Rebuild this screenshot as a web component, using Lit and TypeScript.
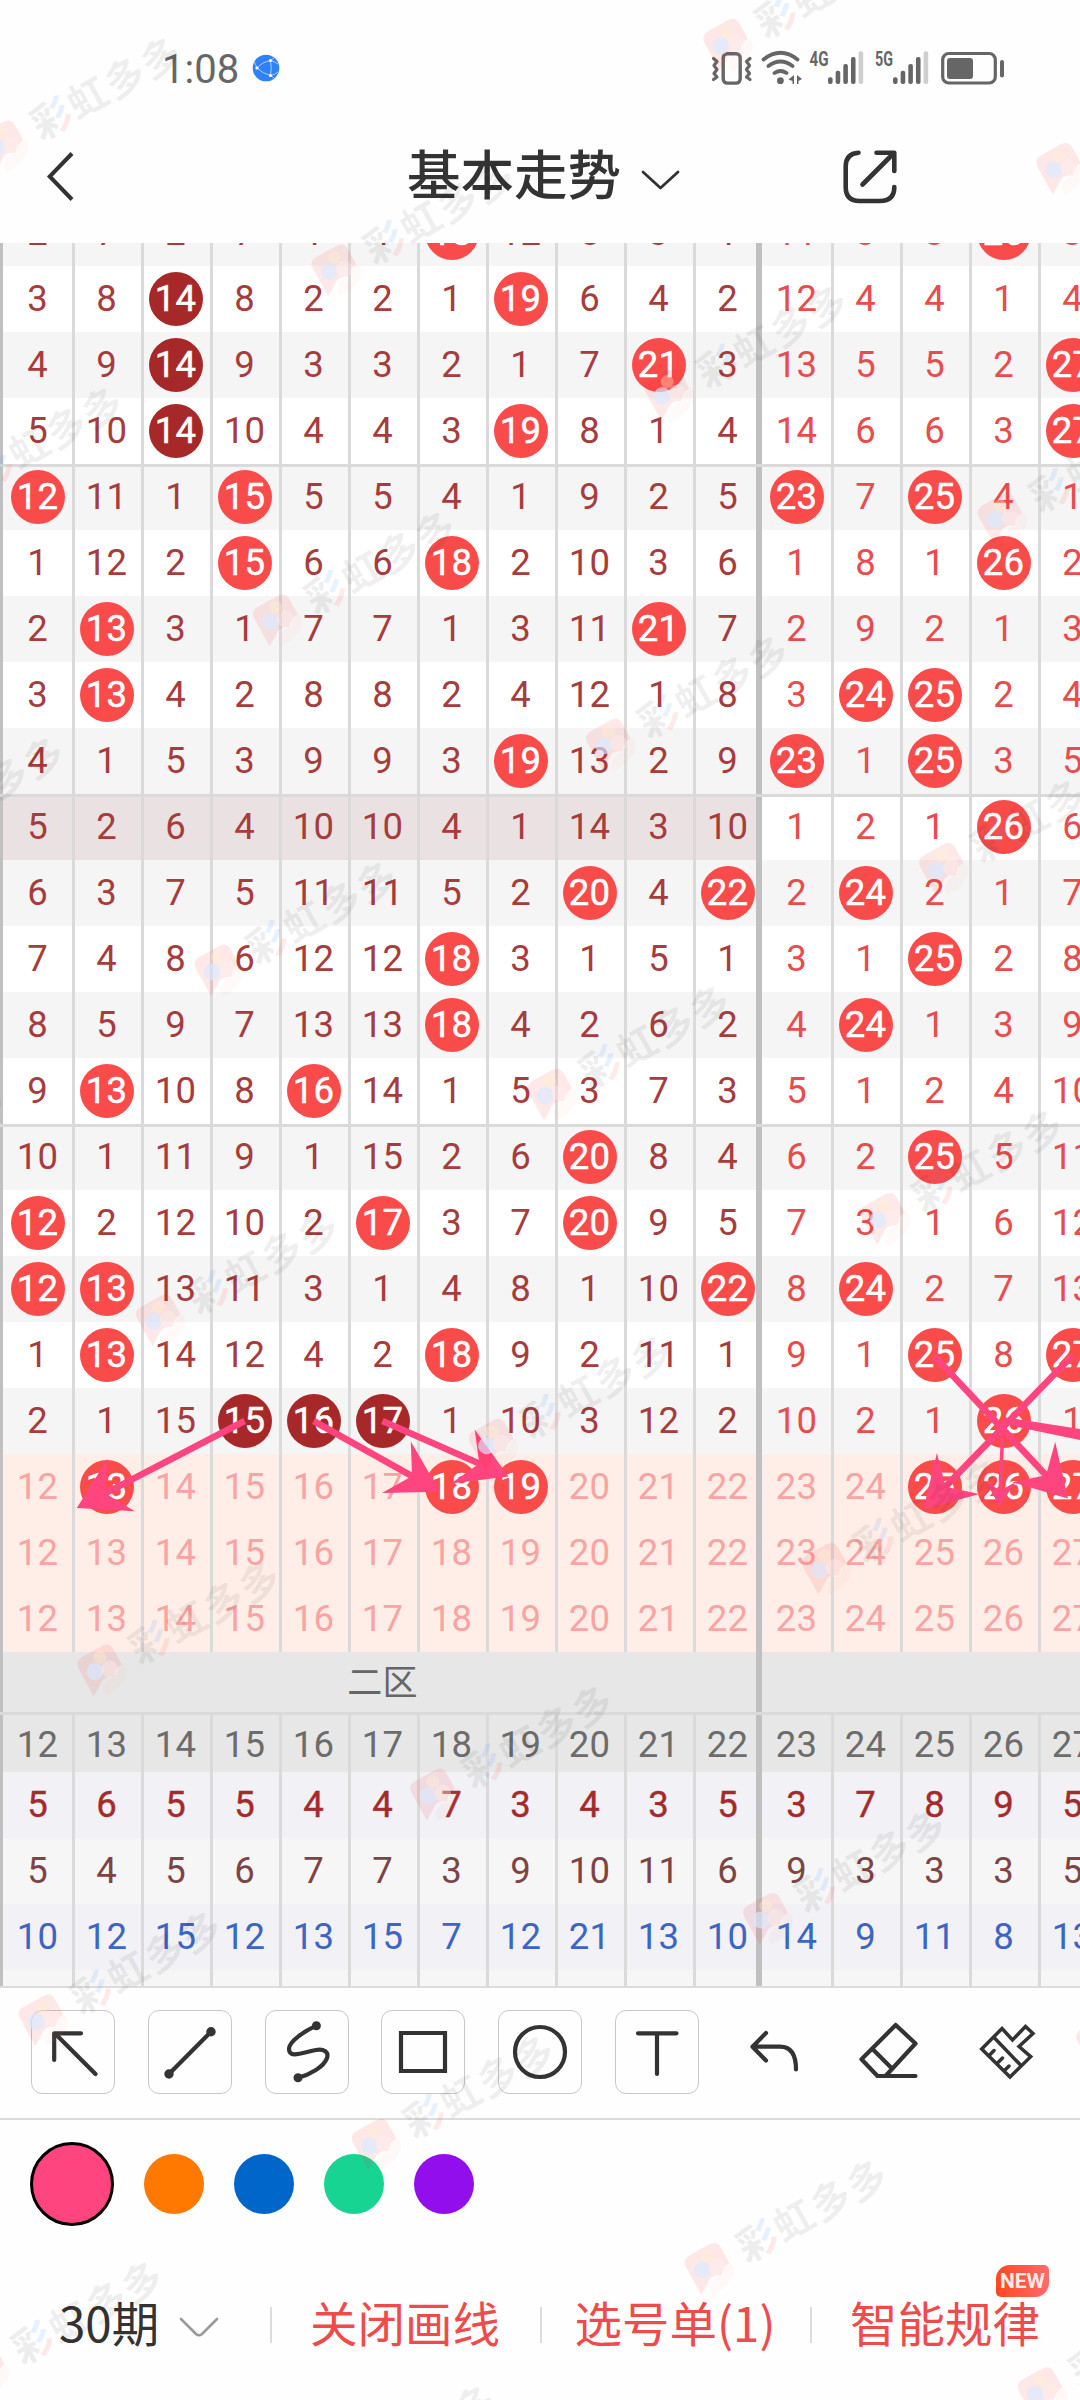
import { LitElement, html, svg, css } from "lit";
import { customElement, property } from "lit/decorators.js";
import { classMap } from "lit/directives/class-map.js";

// "*" marks a drawn number, "#" a repeated drawn number; plain values are miss counts.
const DRAWS: string[] = [
  "2 7 2 7 1 1 *18 12 5 3 1 11 3 3 *26 3",
  "3 8 #14 8 2 2 1 *19 6 4 2 12 4 4 1 4",
  "4 9 #14 9 3 3 2 1 7 *21 3 13 5 5 2 *27",
  "5 10 #14 10 4 4 3 *19 8 1 4 14 6 6 3 *27",
  "*12 11 1 *15 5 5 4 1 9 2 5 *23 7 *25 4 1",
  "1 12 2 *15 6 6 *18 2 10 3 6 1 8 1 *26 2",
  "2 *13 3 1 7 7 1 3 11 *21 7 2 9 2 1 3",
  "3 *13 4 2 8 8 2 4 12 1 8 3 *24 *25 2 4",
  "4 1 5 3 9 9 3 *19 13 2 9 *23 1 *25 3 5",
  "5 2 6 4 10 10 4 1 14 3 10 1 2 1 *26 6",
  "6 3 7 5 11 11 5 2 *20 4 *22 2 *24 2 1 7",
  "7 4 8 6 12 12 *18 3 1 5 1 3 1 *25 2 8",
  "8 5 9 7 13 13 *18 4 2 6 2 4 *24 1 3 9",
  "9 *13 10 8 *16 14 1 5 3 7 3 5 1 2 4 10",
  "10 1 11 9 1 15 2 6 *20 8 4 6 2 *25 5 11",
  "*12 2 12 10 2 *17 3 7 *20 9 5 7 3 1 6 12",
  "*12 *13 13 11 3 1 4 8 1 10 *22 8 *24 2 7 13",
  "1 *13 14 12 4 2 *18 9 2 11 1 9 1 *25 8 *27",
  "2 1 15 #15 #16 #17 1 10 3 12 2 10 2 1 *26 1",
];
const PICKS: string[] = [
  "12 *13 14 15 16 17 *18 *19 20 21 22 23 24 *25 *26 *27",
  "12 13 14 15 16 17 18 19 20 21 22 23 24 25 26 27",
  "12 13 14 15 16 17 18 19 20 21 22 23 24 25 26 27",
];
const NUMBERS = "12 13 14 15 16 17 18 19 20 21 22 23 24 25 26 27";
const STATS: [string, string][] = [
  ["count", "5 6 5 5 4 4 7 3 4 3 5 3 7 8 9 5"],
  ["average", "5 4 5 6 7 7 3 9 10 11 6 9 3 3 3 5"],
  ["longest", "10 12 15 12 13 15 7 12 21 13 10 14 9 11 8 13"],
  ["stub", "              "],
];

@customElement("trend-row")
class TrendRow extends LitElement {
  @property() values = "";
  @property() kind = "plain";
  @property({ type: Boolean }) ruled = false;

  static styles = css`
    :host { display: block; position: relative; flex: none; }
    .row { display: grid; grid-template-columns: repeat(16, 69px); height: 66px; padding-left: 3px;
      box-shadow: inset 3px 0 #c0c0c0; color: #a63c3c; background: #fff; }
    .rule { position: absolute; left: 0; right: 0; top: 0; height: 3px; background: #dadada; }
    .cell { display: flex; align-items: center; justify-content: center; box-shadow: inset 3px 0 #dadada; }
    .cell.first, .cell.zone { box-shadow: none; }
    .cell.last { box-shadow: inset 3px 0 #dadada, inset -6px 0 #c0c0c0; }
    .cell.three { color: #e84c4c; }
    .ball { width: 54px; height: 54px; border-radius: 50%; background: #fa4b4b; color: #fff;
      display: flex; align-items: center; justify-content: center; -webkit-text-stroke: .5px #fff; }
    .repeat { background: #a72829; }
    .striped { background: #f5f5f5; }
    .focus .cell:not(.three) { background: #eae1e2; }
    .pick, .pick .cell.three { color: #f9a3a3; }
    .pick { background: #feeee7; }
    .head, .head .cell.three { color: #6c6c6c; }
    .head { background: #e7e7e7; height: 60px; }
    .head .cell { padding-bottom: 3px; }
    .count, .count .cell.three { color: #a52a2a; -webkit-text-stroke: .4px #a52a2a; }
    .average, .average .cell.three { color: #7d4444; }
    .longest, .longest .cell.three { color: #3c65c4; }
    .count, .longest { background: #f1f1f6; }
    .average, .stub { background: #f6f6f6; }
    .stub { height: 16px; }
  `;

  render() {
    const cells = this.values.split(" ");
    while (cells.length < 16) cells.push("");
    return html`<div class=${"row " + this.kind}>
      ${cells.map((v, i) => {
        const hit = v[0] === "*" || v[0] === "#";
        return html`<div class=${classMap({ cell: true, first: i === 0, last: i === 10, zone: i === 11, three: i > 10 })}
          >${hit ? html`<span class=${classMap({ ball: true, repeat: v[0] === "#" })}>${v.slice(1)}</span>` : v}</div>`;
      })}
    </div>${this.ruled ? html`<div class="rule"></div>` : ""}`;
  }
}

type Arrow = [number, number, number, number];
const ARROWS: Arrow[] = [
  [244.6, 1421, 76.8, 1508],
  [313.6, 1421, 440, 1491.7],
  [382.5, 1421, 508.6, 1476.5],
  [934.3, 1356, 1067.9, 1498.5],
  [1072, 1356, 923.3, 1509.5],
];

function arrowPoints([x1, y1, x2, y2]: Arrow, scale = 1, half = 3.3): string {
  const len = Math.hypot(x2 - x1, y2 - y1);
  const ux = (x2 - x1) / len, uy = (y2 - y1) / len;
  const at = (back: number, side: number) =>
    `${(x2 - ux * back - uy * side).toFixed(1)},${(y2 - uy * back + ux * side).toFixed(1)}`;
  return [at(len, half), at(34 * scale, half), at(50 * scale, 29.5 * scale), at(0, 0),
    at(50 * scale, -29.5 * scale), at(34 * scale, -half), at(len, -half)].join(" ");
}

@customElement("app-root")
class AppRoot extends LitElement {
  static styles = css`
    :host { display: block; position: relative; width: 1080px; height: 2400px; overflow: hidden; background: #fefefe;
      font-family: Roboto, "Noto Sans CJK SC", sans-serif; color: #333; }
    svg { display: block; fill: none; stroke: #333; stroke-linecap: round; stroke-linejoin: round; }
    .status { display: flex; align-items: flex-start; height: 108px; box-sizing: border-box; padding: 45px 66px 0 162px; }
    .clock { font-size: 40px; line-height: 49px; color: #666; width: 90px; }
    .globe { margin-top: 9px; }
    .signals { margin: 0 0 0 auto; }
    .title-bar { display: grid; grid-template-columns: 407px 281px 1fr; align-items: start; height: 135px; }
    .back { margin: 41px 0 0 42px; }
    .title { display: flex; font: 500 53.5px/72px "Noto Sans CJK SC", sans-serif; padding-top: 28px; white-space: nowrap; }
    .title svg { margin: 31px 0 0 19px; }
    .share { margin: 41px 0 0 154px; }
    .board { display: flex; flex-direction: column; height: 1743px; overflow: hidden; font-size: 36.5px; line-height: 66px;
      letter-spacing: .2px; border-bottom: 2px solid #dcdcdc; box-sizing: content-box; }
    .board trend-row:first-child { margin-top: -43px; }
    .zones { display: grid; grid-template-columns: 762px 1fr; height: 60px; flex: none; background: #e7e7e7; box-shadow: inset 3px 0 #c0c0c0; }
    .zone-name { display: flex; align-items: center; justify-content: center; padding: 0 0 5px 3px; box-shadow: inset -6px 0 #c0c0c0;
      font: 35px/50px "Noto Sans CJK SC", sans-serif; color: #666; }
    .tools { display: flex; box-sizing: border-box; height: 132px; padding: 22px 0 0 31px; border-bottom: 2px solid #dcdcdc; }
    .tool { box-sizing: border-box; width: 84px; height: 84px; border: 1.5px solid #c8c8c8; border-radius: 11px; margin-right: 32.8px; }
    .tool svg { margin: -1px; }
    .action { margin-left: 0; }
    .colors { display: flex; align-items: center; gap: 30px; padding: 22px 0 0 30px; height: 84px; }
    .swatch { width: 60px; height: 60px; border-radius: 50%; }
    .pink { background: #ff457f; box-sizing: border-box; width: 84px; height: 84px; border: 3px solid #000; }
    .orange { background: #ff7800; }
    .blue { background: #0066ca; }
    .green { background: #18d493; }
    .purple { background: #920eec; }
    .menu { display: grid; grid-template-columns: repeat(4, 270px); margin-top: 63px; height: 72px;
      font: 47.5px/72px "Noto Sans CJK SC", sans-serif; color: #f04b4b; }
    .item { position: relative; display: flex; justify-content: center; align-items: center; white-space: nowrap; padding-bottom: 7px; height: 65px; }
    .item + .item { background: linear-gradient(#dcdcdc, #dcdcdc) 0 50% / 2px 36px no-repeat; }
    .periods { color: #333; justify-content: flex-start; padding-left: 59px; gap: 19px; }
    .periods svg { stroke: #999; margin-top: 12px; }
    .badge { position: absolute; right: 31px; top: -24px; width: 53px; height: 32px; border-radius: 14px 5px 14px 5px;
      background: linear-gradient(90deg, #ff4720, #ff6b6b); color: #ffe9e4; font: 700 21px/33px Roboto, sans-serif; text-align: center; }
    .overlay { position: absolute; left: 0; top: 0; pointer-events: none; }
    .arrows { fill: #ff457f; stroke: none; }
    .marks { stroke: none; font: 700 40px "Noto Sans CJK SC", sans-serif; text-anchor: middle; }
  `;

  private signalBars(x: number) {
    const tops = [77.3, 70.7, 64, 57, 51.3];
    return tops.map((t, i) => svg`<rect x=${x + i * 7.65 - 2.3} y=${t - 45} width="4.6" height=${84 - t} rx="2"
      fill=${i === 4 ? "#cecece" : "#666"} />`);
  }

  private statusIcons() {
    return html`<svg class="signals" width="304" height="46" viewBox="710 0 304 46">
      <g stroke="#666" stroke-width="3.4">
        <rect x="723.2" y="8.7" width="17" height="29.4" rx="4" />
        <path d="M713.5 13.5l3.5 3-3 4 3 4-3 4 3 3.500-3.500 2.500M750 13.500l-3.500 3 3 4-3 4 3 4-3 3.500 3.500 2.500" stroke-width="3.200" />
        <path d="M763.500 14.500Q780.500 1 797.500 14.500M768.500 21Q780.500 12 792.500 21M774.500 28Q780.500 24 786.500 28" stroke-width="3.800" />
        <rect x="942.700" y="8.500" width="52.600" height="29.500" rx="6" stroke-width="3.200" />
      </g>
      <g fill="#666" stroke="none">
        <circle cx="780.400" cy="35.700" r="3.400" />
        <path d="M794 30v9h-1.500v-3l-4-1.500zM797 30v9h1.500v-3l3.500-2z" />
        <rect x="947" y="13" width="26" height="21" rx="3" />
        <rect x="1000" y="15" width="4" height="17.500" rx="2" />
        <text x="809.500" y="20.600" font-size="20" font-weight="700" textLength="19" lengthAdjust="spacingAndGlyphs">4G</text>
        <text x="875" y="20.600" font-size="20" font-weight="700" textLength="18" lengthAdjust="spacingAndGlyphs">5G</text>
        ${this.signalBars(830.3)}${this.signalBars(895.3)}
      </g>
    </svg>`;
  }

  private tool(shape: unknown) {
    return html`<div class="tool"><svg width="84" height="84" viewBox="0 0 84 84" stroke-width="4.2">${shape}</svg></div>`;
  }

  private marks() {
    const out: unknown[] = [];
    for (let j = -2; j < 8; j++) {
      for (let i = -3; i < 6; i++) {
        const x = 336 + 333 * i - 58.6 * j;
        const y = 269 + 124.2 * i + 350 * j;
        if (x < -220 || x > 1110 || y < -30 || y > 2520) continue;
        out.push(svg`<g transform=${`translate(${x.toFixed(1)} ${y.toFixed(1)}) rotate(-29)`}>
          <path d="M-20 -11q0 -9 9 -9h22q9 0 9 9v17q-8 0 -13 7q-9 -7 -17 1l-10 6z" fill="#ff2020" fill-opacity=".1" />
          <path d="M-10 20q9 -11 18 -5q4 -9 14 -8q1 8 -6 13q-14 7 -26 6z" fill="#ff9a80" fill-opacity=".06" />
          <circle cx="4" cy="-11" r="6.500" fill="#fff3cc" fill-opacity=".35" />
          <circle cx="-7" cy="-1" r="8.500" fill="#d8eaff" fill-opacity=".65" />
          <circle cx="7" cy="4" r="8.500" fill="#fff0ec" fill-opacity=".4" />
          <g fill="#000" fill-opacity=".065">
            <text x="55" y="15" fill="url(#tri)" fill-opacity="1">彩</text><text x="97" y="15">虹</text>
            <text x="139" y="15">多</text><text x="180" y="15">多</text>
          </g>
        </g>`);
      }
    }
    return out;
  }

  render() {
    return html`
      <div class="status">
        <div class="clock">1:08</div>
        <svg class="globe" width="28" height="28" viewBox="0 0 28 28" stroke-width="1">
          <circle cx="14" cy="14" r="13.300" fill="#3080f6" stroke="none" />
          <path d="M5 14Q10 8 18.500 6.500M5 14Q11 20 18.500 21.500M18.500 6.500Q20 14 18.500 21.500M5 14Q3 10 2.500 8M18.500 6.500L22 4M18.500 21.500L22 24M18.500 6.500Q24 8 26 10M18.500 21.500Q23 21 26 18" stroke="#a9ccff" />
          <g fill="#fff" stroke="none"><circle cx="5" cy="14" r="1.600" /><circle cx="18.500" cy="6.500" r="1.600" /><circle cx="18.500" cy="21.500" r="1.600" /></g>
        </svg>
        ${this.statusIcons()}
      </div>
      <div class="title-bar">
        <svg class="back" width="40" height="56" viewBox="0 0 40 56" stroke-width="4" style="stroke-linecap:butt;stroke-linejoin:miter"><path d="M30 4.500L7.700 27.500L30 50.500" /></svg>
        <div class="title">基本走势<svg width="42" height="28" viewBox="0 0 42 28" stroke-width="2.800"><path d="M3 5L20.500 21L38 5" /></svg></div>
        <svg class="share" width="58" height="58" viewBox="0 0 58 58" stroke-width="4.600"><path d="M16.500 3.700Q3.700 4.500 3.700 17.500V38Q3.700 52 17.500 52H38Q52.300 52 52.300 38M34.500 3.700H52.300V22M51 5L20.500 35.500" /></svg>
      </div>
      <div class="board">
        ${DRAWS.map((v, i) => html`<trend-row .values=${v} .kind=${i === 9 ? "focus" : i % 2 ? "plain" : "striped"} .ruled=${i % 5 === 4}></trend-row>`)}
        ${PICKS.map((v) => html`<trend-row .values=${v} .kind=${"pick"}></trend-row>`)}
        <div class="zones"><div class="zone-name">二区</div></div>
        <trend-row .values=${NUMBERS} .kind=${"head"} .ruled=${true}></trend-row>
        ${STATS.map(([k, v]) => html`<trend-row .values=${v} .kind=${k}></trend-row>`)}
      </div>
      <div class="tools">
        ${this.tool(svg`<path d="M64.500 64L24 23.500M50 23.300H23.200V50" />`)}
        ${this.tool(svg`<path d="M21 64L63 21.700" /><circle cx="21" cy="64" r="2.600" fill="#333" /><circle cx="63" cy="21.700" r="2.600" fill="#333" />`)}
        ${this.tool(svg`<path d="M51.400 15.700C40 21 24 31 24 39C24 49 38 42.500 51 40C59 38.500 64 42 62 48C59 57 44 65 33 67.700" /><circle cx="51.400" cy="15.700" r="2.400" fill="#333" /><circle cx="33" cy="67.700" r="2.400" fill="#333" />`)}
        ${this.tool(svg`<path d="M20 23H64V61H20Z" style="stroke-linejoin:miter" />`)}
        ${this.tool(svg`<circle cx="42" cy="42" r="25" />`)}
        ${this.tool(svg`<path d="M23 23.300H61.500M42 23.300V64" />`)}
        <svg class="action" width="340" height="84" viewBox="732 2010 340 84" stroke-width="4.200">
          <path d="M766 2033L752.500 2046.700L766 2060.500M753 2046.700H780Q796 2046.700 796 2069.500" />
          <path d="M895.700 2025L915.500 2043.500L886 2075.500M895.700 2025L861.500 2059.300L877.500 2076H915.500M872.500 2049L890.500 2067" />
          <path d="M1002 2028.500L1012.500 2040L1025.500 2026.500L1033 2033.500L1019 2046.500L1030.700 2056.700L1010 2077L981.700 2049ZM995 2038.500L1020.500 2065M988.700 2056L994 2050.500M997 2063.500L1002.500 2058M1004.500 2070.500L1009 2066" stroke-width="3.500" style="stroke-linejoin:miter" />
        </svg>
      </div>
      <div class="colors">
        <span class="swatch pink"></span><span class="swatch orange"></span><span class="swatch blue"></span><span class="swatch green"></span><span class="swatch purple"></span>
      </div>
      <div class="menu">
        <div class="item periods">30期<svg width="42" height="26" viewBox="0 0 42 26" stroke-width="2.600"><path d="M3 4L18 19Q21 21.500 24 19L39 4" /></svg></div>
        <div class="item">关闭画线</div>
        <div class="item">选号单(1)</div>
        <div class="item">智能规律<span class="badge">NEW</span></div>
      </div>
      <svg class="overlay arrows" width="1080" height="2400" viewBox="0 0 1080 2400">
        ${ARROWS.map((a) => svg`<polygon points=${arrowPoints(a)} />`)}
        <polygon points=${arrowPoints([1003.2, 1421, 999.4, 1506.5], 0.5, 1.8)} />
        <polygon points="1003,1417 1080,1429 1080,1440 1003,1424" />
      </svg>
      <svg class="overlay marks" width="1080" height="2400" viewBox="0 0 1080 2400">
        <defs><pattern id="tri" patternUnits="userSpaceOnUse" x="0" y="-40" width="200" height="80">
          <rect width="58" height="80" fill="#000" fill-opacity=".065" />
          <rect x="58" width="142" height="44" fill="#2a80ff" fill-opacity=".11" />
          <rect x="58" y="44" width="142" height="36" fill="#ff3030" fill-opacity=".1" />
        </pattern></defs>
        ${this.marks()}
      </svg>
    `;
  }
}
